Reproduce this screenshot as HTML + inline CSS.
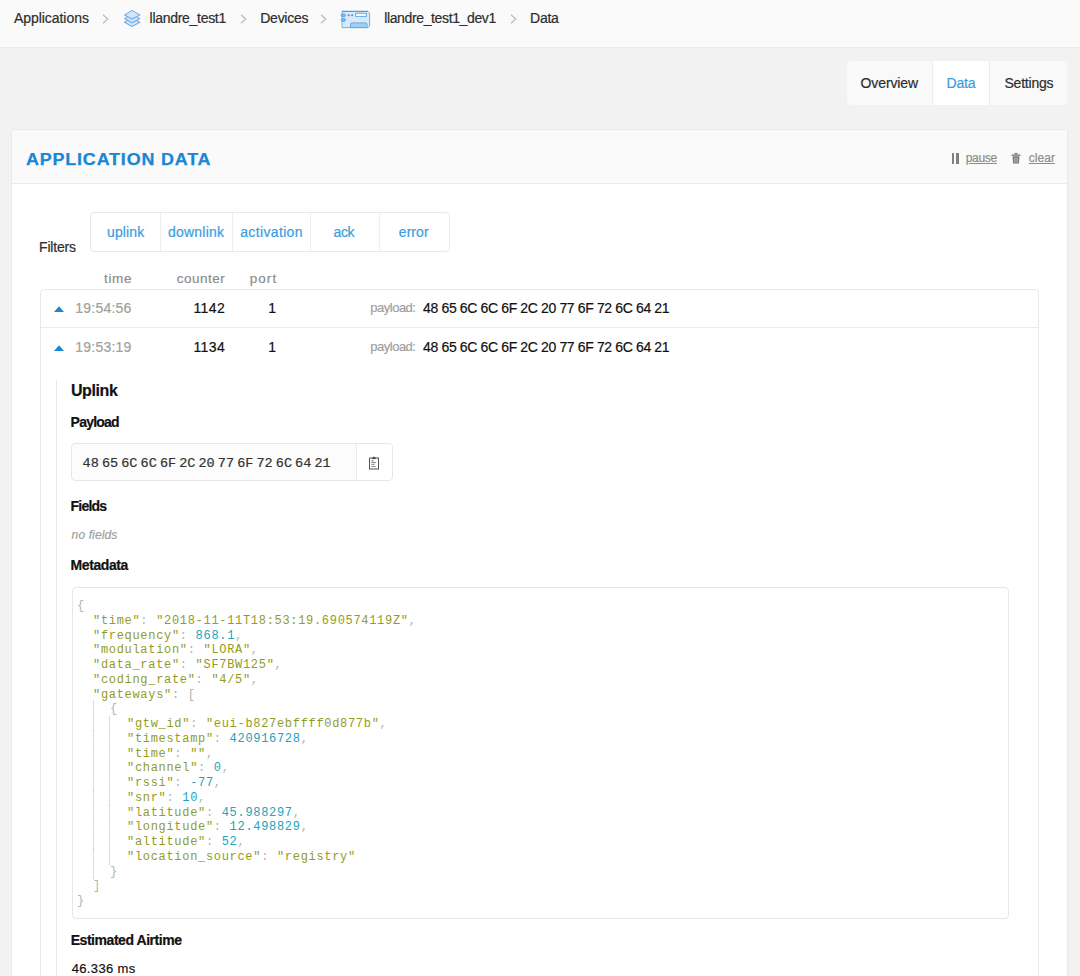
<!DOCTYPE html>
<html><head><meta charset="utf-8">
<style>
*{box-sizing:border-box}
html,body{margin:0;padding:0;width:1080px;height:976px;overflow:hidden;background:#f2f2f2;font-family:"Liberation Sans",sans-serif;color:#222}
.a{position:absolute;white-space:nowrap;line-height:1}
.t{-webkit-text-stroke:0.2px currentColor}
.json{font-family:"Liberation Mono",monospace;font-size:12px;letter-spacing:0.69px}
.s{color:#929c1e}.n{color:#22a3bb}.p{color:#b3b3b3}
</style></head><body>
<div class="a" style="left:0;top:0;width:1080px;height:48px;background:#fafafa;border-bottom:1px solid #ebebeb"></div>
<svg class="a" style="left:102px;top:14px" width="7" height="10" viewBox="0 0 7 10"><path d="M1 0.7 L5.8 5 L1 9.3" fill="none" stroke="#bdbdbd" stroke-width="1.3"/></svg>
<svg class="a" style="left:240px;top:14px" width="7" height="10" viewBox="0 0 7 10"><path d="M1 0.7 L5.8 5 L1 9.3" fill="none" stroke="#bdbdbd" stroke-width="1.3"/></svg>
<svg class="a" style="left:320px;top:14px" width="7" height="10" viewBox="0 0 7 10"><path d="M1 0.7 L5.8 5 L1 9.3" fill="none" stroke="#bdbdbd" stroke-width="1.3"/></svg>
<svg class="a" style="left:510px;top:14px" width="7" height="10" viewBox="0 0 7 10"><path d="M1 0.7 L5.8 5 L1 9.3" fill="none" stroke="#bdbdbd" stroke-width="1.3"/></svg>
<svg class="a" style="left:123px;top:9px" width="19" height="19" viewBox="0 0 19 19">
<path d="M1.5 13.3L9.15 8.8L16.8 13.3L9.15 17.4Z" fill="#d3e5f6" stroke="#6fb0e8" stroke-width="1.1" stroke-linejoin="round"/>
<path d="M1.5 9.6L9.15 5.1L16.8 9.6L9.15 13.7Z" fill="#d3e5f6" stroke="#6fb0e8" stroke-width="1.1" stroke-linejoin="round"/>
<path d="M1.5 5.9L9.15 1.4L16.8 5.9L9.15 10Z" fill="#d3e5f6" stroke="#6fb0e8" stroke-width="1.1" stroke-linejoin="round"/>
</svg>
<svg class="a" style="left:340px;top:10px" width="31" height="19" viewBox="0 0 31 19">
<path d="M2 1.4H28L29.6 3V16.1L28 17.6H2Z" fill="#d8e9f8" stroke="#64abe9" stroke-width="0.9"/>
<path d="M2 1.4H28" stroke="#4a9be0" stroke-width="1.1"/>
<rect x="1.1" y="3.9" width="4.4" height="2.8" rx="1.4" fill="#7dbaf0" stroke="#4f9fe4" stroke-width="0.8"/>
<rect x="1.1" y="8.6" width="4.4" height="2.8" rx="1.4" fill="#7dbaf0" stroke="#4f9fe4" stroke-width="0.8"/>
<circle cx="8.7" cy="5.2" r="1.05" fill="#3a8fdc"/><circle cx="12.1" cy="5.2" r="1.05" fill="#3a8fdc"/>
<rect x="15.6" y="3.3" width="10.8" height="3.1" fill="#f4f9fe" stroke="#5aa5e6" stroke-width="0.9"/>
<path d="M10.6 17.6V14.2Q10.6 12.9 11.9 12.9H25.7Q27 12.9 27 14.2V17.6Z" fill="#a3cff3" stroke="#5aa5e6" stroke-width="0.9"/>
</svg>

<div class="a" style="left:847px;top:61px;width:220px;height:44px;background:#f9f9f9;border-radius:4px;overflow:hidden">
 <div class="a" style="left:85px;top:0;width:58px;height:44px;background:#fff;border-left:1px solid #ececec;border-right:1px solid #ececec"></div>
</div>

<div class="a" style="left:11px;top:129px;width:1057px;height:900px;background:#fff;border:1px solid #e9e9e9;border-radius:4px 4px 0 0;overflow:hidden">
 <div class="a" style="left:0;top:0;width:1055px;height:54px;background:#fafafa;border-bottom:1px solid #ececec"></div>
</div>
<!-- pause icon -->
<div class="a" style="left:951.8px;top:153.3px;width:2.4px;height:10.3px;background:#808080"></div>
<div class="a" style="left:956px;top:153.3px;width:2.6px;height:10.3px;background:#808080"></div>
<!-- trash icon -->
<svg class="a" style="left:1011px;top:153px" width="10" height="11" viewBox="0 0 10 11"><rect x="0.5" y="1.5" width="9" height="1.3" fill="#777"/><rect x="3.5" y="0" width="3" height="1.5" fill="#777"/><path d="M1.5 3.3H8.5L7.9 10.6H2.1Z" fill="#777"/><path d="M3.6 4.5V9.5M5 4.5V9.5M6.4 4.5V9.5" stroke="#cfcfcf" stroke-width="0.6"/></svg>

<div class="a" style="left:90px;top:212px;width:360px;height:40px;border:1px solid #e9e9e9;border-radius:4px"></div>
<div class="a" style="left:160px;top:213px;width:1px;height:38px;background:#efefef"></div>
<div class="a" style="left:232px;top:213px;width:1px;height:38px;background:#efefef"></div>
<div class="a" style="left:310px;top:213px;width:1px;height:38px;background:#efefef"></div>
<div class="a" style="left:379px;top:213px;width:1px;height:38px;background:#efefef"></div>

<div class="a" style="left:40px;top:289px;width:999px;height:800px;border:1px solid #e8e8e8;border-radius:4px"></div>
<div class="a" style="left:41px;top:327px;width:997px;height:1px;background:#ececec"></div>
<svg class="a" style="left:54.3px;top:306px" width="10" height="6" viewBox="0 0 10 6"><path d="M0 6 L5 0.2 L10 6Z" fill="#1a86d6"/></svg>
<svg class="a" style="left:54.3px;top:345px" width="10" height="6" viewBox="0 0 10 6"><path d="M0 6 L5 0.2 L10 6Z" fill="#1a86d6"/></svg>

<div class="a" style="left:56px;top:380px;width:1px;height:600px;background:#e8e8e8"></div>
<div class="a" style="left:71px;top:443px;width:322px;height:38px;border:1px solid #e6e6e6;border-radius:4px;background:#fcfcfc"></div>
<div class="a" style="left:356px;top:444px;width:36px;height:36px;background:#fff;border-left:1px solid #ececec;border-radius:0 3px 3px 0"></div>
<svg class="a" style="left:368px;top:456px" width="12" height="14" viewBox="0 0 12 14"><rect x="1.5" y="2" width="9" height="11" fill="#fff" stroke="#555" stroke-width="1"/><path d="M4.2 2.6L6 0.8L7.8 2.6Z" fill="#444" stroke="#444" stroke-width="0.8"/><path d="M3.3 4.8H6M3.3 6.6H8M3.3 8.4H6.5M3.3 10.6H7.5" stroke="#777" stroke-width="0.9"/></svg>
<div class="a" style="left:72px;top:587px;width:937px;height:332px;border:1px solid #e6e6e6;border-radius:4px;background:#fff"></div>
<div class="a" style="left:93px;top:701px;width:1px;height:178px;background:repeating-linear-gradient(to bottom,#c9c9c9 0,#c9c9c9 1.2px,#dedede 1.2px,#dedede 14.75px)"></div>
<div class="a" style="left:109px;top:716px;width:1px;height:148.5px;background:repeating-linear-gradient(to bottom,#c9c9c9 0,#c9c9c9 1.2px,#dedede 1.2px,#dedede 14.75px)"></div>
<div class="a json" style="left:0;top:599px;line-height:14.75px">
<div style="padding-left:77px"><span class="p">{</span></div>
<div style="padding-left:93px"><span class="s">"time"</span><span class="p">: </span><span class="s">"2018-11-11T18:53:19.690574119Z"</span><span class="p">,</span></div>
<div style="padding-left:93px"><span class="s">"frequency"</span><span class="p">: </span><span class="n">868.1</span><span class="p">,</span></div>
<div style="padding-left:93px"><span class="s">"modulation"</span><span class="p">: </span><span class="s">"LORA"</span><span class="p">,</span></div>
<div style="padding-left:93px"><span class="s">"data_rate"</span><span class="p">: </span><span class="s">"SF7BW125"</span><span class="p">,</span></div>
<div style="padding-left:93px"><span class="s">"coding_rate"</span><span class="p">: </span><span class="s">"4/5"</span><span class="p">,</span></div>
<div style="padding-left:93px"><span class="s">"gateways"</span><span class="p">: [</span></div>
<div style="padding-left:110px"><span class="p">{</span></div>
<div style="padding-left:127px"><span class="s">"gtw_id"</span><span class="p">: </span><span class="s">"eui-b827ebffff0d877b"</span><span class="p">,</span></div>
<div style="padding-left:127px"><span class="s">"timestamp"</span><span class="p">: </span><span class="n">420916728</span><span class="p">,</span></div>
<div style="padding-left:127px"><span class="s">"time"</span><span class="p">: </span><span class="s">""</span><span class="p">,</span></div>
<div style="padding-left:127px"><span class="s">"channel"</span><span class="p">: </span><span class="n">0</span><span class="p">,</span></div>
<div style="padding-left:127px"><span class="s">"rssi"</span><span class="p">: </span><span class="n">-77</span><span class="p">,</span></div>
<div style="padding-left:127px"><span class="s">"snr"</span><span class="p">: </span><span class="n">10</span><span class="p">,</span></div>
<div style="padding-left:127px"><span class="s">"latitude"</span><span class="p">: </span><span class="n">45.988297</span><span class="p">,</span></div>
<div style="padding-left:127px"><span class="s">"longitude"</span><span class="p">: </span><span class="n">12.498829</span><span class="p">,</span></div>
<div style="padding-left:127px"><span class="s">"altitude"</span><span class="p">: </span><span class="n">52</span><span class="p">,</span></div>
<div style="padding-left:127px"><span class="s">"location_source"</span><span class="p">: </span><span class="s">"registry"</span></div>
<div style="padding-left:110px"><span class="p">}</span></div>
<div style="padding-left:93px"><span class="p">]</span></div>
<div style="padding-left:77px"><span class="p">}</span></div>
</div>
<div class="a t" style="left:14.00px;top:10.70px;color:#2d2d2d;font-family:'Liberation Sans',sans-serif;font-size:14px;font-weight:normal;font-style:normal;letter-spacing:-0.055px;">Applications</div>
<div class="a t" style="left:149.60px;top:10.70px;color:#2d2d2d;font-family:'Liberation Sans',sans-serif;font-size:14px;font-weight:normal;font-style:normal;letter-spacing:-0.292px;">llandre_test1</div>
<div class="a t" style="left:260.30px;top:10.70px;color:#2d2d2d;font-family:'Liberation Sans',sans-serif;font-size:14px;font-weight:normal;font-style:normal;letter-spacing:-0.283px;">Devices</div>
<div class="a t" style="left:384.20px;top:10.70px;color:#2d2d2d;font-family:'Liberation Sans',sans-serif;font-size:14px;font-weight:normal;font-style:normal;letter-spacing:-0.365px;">llandre_test1_dev1</div>
<div class="a t" style="left:530.00px;top:10.70px;color:#2d2d2d;font-family:'Liberation Sans',sans-serif;font-size:14px;font-weight:normal;font-style:normal;letter-spacing:-0.233px;">Data</div>
<div class="a t" style="left:860.50px;top:75.80px;color:#2d2d2d;font-family:'Liberation Sans',sans-serif;font-size:14px;font-weight:normal;font-style:normal;letter-spacing:-0.100px;">Overview</div>
<div class="a t" style="left:946.50px;top:75.80px;color:#3b9ce0;font-family:'Liberation Sans',sans-serif;font-size:14px;font-weight:normal;font-style:normal;letter-spacing:-0.167px;">Data</div>
<div class="a t" style="left:1004.50px;top:75.80px;color:#2d2d2d;font-family:'Liberation Sans',sans-serif;font-size:14px;font-weight:normal;font-style:normal;letter-spacing:-0.214px;">Settings</div>
<div class="a t" style="left:25.70px;top:151.80px;color:#1a86d6;font-family:'Liberation Sans',sans-serif;font-size:16px;font-weight:bold;font-style:normal;letter-spacing:0.732px;transform:scaleX(1.1200);transform-origin:0 0;-webkit-text-stroke:0.25px #1a86d6;">APPLICATION DATA</div>
<div class="a t" style="left:965.70px;top:151.70px;color:#8d8d8d;font-family:'Liberation Sans',sans-serif;font-size:12px;font-weight:normal;font-style:normal;letter-spacing:-0.300px;text-decoration:underline;">pause</div>
<div class="a t" style="left:1028.80px;top:151.70px;color:#8d8d8d;font-family:'Liberation Sans',sans-serif;font-size:12px;font-weight:normal;font-style:normal;letter-spacing:0.050px;text-decoration:underline;">clear</div>
<div class="a t" style="left:39.00px;top:240.20px;color:#2d2d2d;font-family:'Liberation Sans',sans-serif;font-size:14px;font-weight:normal;font-style:normal;letter-spacing:-0.167px;">Filters</div>
<div class="a t" style="left:107.00px;top:224.70px;color:#3b9ce0;font-family:'Liberation Sans',sans-serif;font-size:14px;font-weight:normal;font-style:normal;letter-spacing:0.140px;">uplink</div>
<div class="a t" style="left:168.00px;top:224.70px;color:#3b9ce0;font-family:'Liberation Sans',sans-serif;font-size:14px;font-weight:normal;font-style:normal;letter-spacing:0.214px;">downlink</div>
<div class="a t" style="left:240.20px;top:224.70px;color:#3b9ce0;font-family:'Liberation Sans',sans-serif;font-size:14px;font-weight:normal;font-style:normal;letter-spacing:0.356px;">activation</div>
<div class="a t" style="left:333.60px;top:224.70px;color:#3b9ce0;font-family:'Liberation Sans',sans-serif;font-size:14px;font-weight:normal;font-style:normal;letter-spacing:-0.400px;">ack</div>
<div class="a t" style="left:398.80px;top:224.70px;color:#3b9ce0;font-family:'Liberation Sans',sans-serif;font-size:14px;font-weight:normal;font-style:normal;letter-spacing:0.050px;">error</div>
<div class="a t" style="left:104.10px;top:271.60px;color:#8d8d8d;font-family:'Liberation Sans',sans-serif;font-size:13.5px;font-weight:normal;font-style:normal;letter-spacing:0.633px;">time</div>
<div class="a t" style="left:176.70px;top:271.60px;color:#8d8d8d;font-family:'Liberation Sans',sans-serif;font-size:13.5px;font-weight:normal;font-style:normal;letter-spacing:0.517px;">counter</div>
<div class="a t" style="left:249.70px;top:271.60px;color:#8d8d8d;font-family:'Liberation Sans',sans-serif;font-size:13.5px;font-weight:normal;font-style:normal;letter-spacing:1.067px;">port</div>
<div class="a t" style="left:75.30px;top:300.60px;color:#a0a0a0;font-family:'Liberation Sans',sans-serif;font-size:14px;font-weight:normal;font-style:normal;letter-spacing:0.214px;">19:54:56</div>
<div class="a t" style="left:193.40px;top:300.60px;color:#111;font-family:'Liberation Sans',sans-serif;font-size:14px;font-weight:normal;font-style:normal;letter-spacing:0.467px;">1142</div>
<div class="a t" style="left:268.20px;top:300.60px;color:#111;font-family:'Liberation Sans',sans-serif;font-size:14px;font-weight:normal;font-style:normal;letter-spacing:0.000px;">1</div>
<div class="a t" style="left:370.30px;top:300.90px;color:#a0a0a0;font-family:'Liberation Sans',sans-serif;font-size:13px;font-weight:normal;font-style:normal;letter-spacing:-0.500px;">payload:</div>
<div class="a t" style="left:423.10px;top:300.60px;color:#111;font-family:'Liberation Sans',sans-serif;font-size:14px;font-weight:normal;font-style:normal;letter-spacing:-0.365px;">48 65 6C 6C 6F 2C 20 77 6F 72 6C 64 21</div>
<div class="a t" style="left:75.30px;top:339.80px;color:#a0a0a0;font-family:'Liberation Sans',sans-serif;font-size:14px;font-weight:normal;font-style:normal;letter-spacing:0.214px;">19:53:19</div>
<div class="a t" style="left:193.40px;top:339.80px;color:#111;font-family:'Liberation Sans',sans-serif;font-size:14px;font-weight:normal;font-style:normal;letter-spacing:0.467px;">1134</div>
<div class="a t" style="left:268.20px;top:339.80px;color:#111;font-family:'Liberation Sans',sans-serif;font-size:14px;font-weight:normal;font-style:normal;letter-spacing:0.000px;">1</div>
<div class="a t" style="left:370.30px;top:340.10px;color:#a0a0a0;font-family:'Liberation Sans',sans-serif;font-size:13px;font-weight:normal;font-style:normal;letter-spacing:-0.500px;">payload:</div>
<div class="a t" style="left:423.10px;top:339.80px;color:#111;font-family:'Liberation Sans',sans-serif;font-size:14px;font-weight:normal;font-style:normal;letter-spacing:-0.365px;">48 65 6C 6C 6F 2C 20 77 6F 72 6C 64 21</div>
<div class="a t" style="left:70.90px;top:382.60px;color:#111;font-family:'Liberation Sans',sans-serif;font-size:16px;font-weight:bold;font-style:normal;letter-spacing:-0.380px;">Uplink</div>
<div class="a t" style="left:70.60px;top:414.80px;color:#111;font-family:'Liberation Sans',sans-serif;font-size:14px;font-weight:bold;font-style:normal;letter-spacing:-0.783px;">Payload</div>
<div class="a t" style="left:70.60px;top:498.60px;color:#111;font-family:'Liberation Sans',sans-serif;font-size:14px;font-weight:bold;font-style:normal;letter-spacing:-0.800px;">Fields</div>
<div class="a t" style="left:71.60px;top:528.50px;color:#a0a0a0;font-family:'Liberation Sans',sans-serif;font-size:12px;font-weight:normal;font-style:italic;letter-spacing:0.125px;">no fields</div>
<div class="a t" style="left:70.60px;top:557.60px;color:#111;font-family:'Liberation Sans',sans-serif;font-size:14px;font-weight:bold;font-style:normal;letter-spacing:-0.429px;">Metadata</div>
<div class="a t" style="left:70.70px;top:933.20px;color:#111;font-family:'Liberation Sans',sans-serif;font-size:14px;font-weight:bold;font-style:normal;letter-spacing:-0.450px;">Estimated Airtime</div>
<div class="a t" style="left:71.70px;top:962.10px;color:#111;font-family:'Liberation Sans',sans-serif;font-size:13px;font-weight:normal;font-style:normal;letter-spacing:0.362px;">46.336 ms</div>
<div class="a t" style="left:82.60px;top:456.90px;color:#333;font-family:'Liberation Mono',monospace;font-size:13.5px;font-weight:normal;font-style:normal;word-spacing:-4.983px;">48 65 6C 6C 6F 2C 20 77 6F 72 6C 64 21</div>
</body></html>
